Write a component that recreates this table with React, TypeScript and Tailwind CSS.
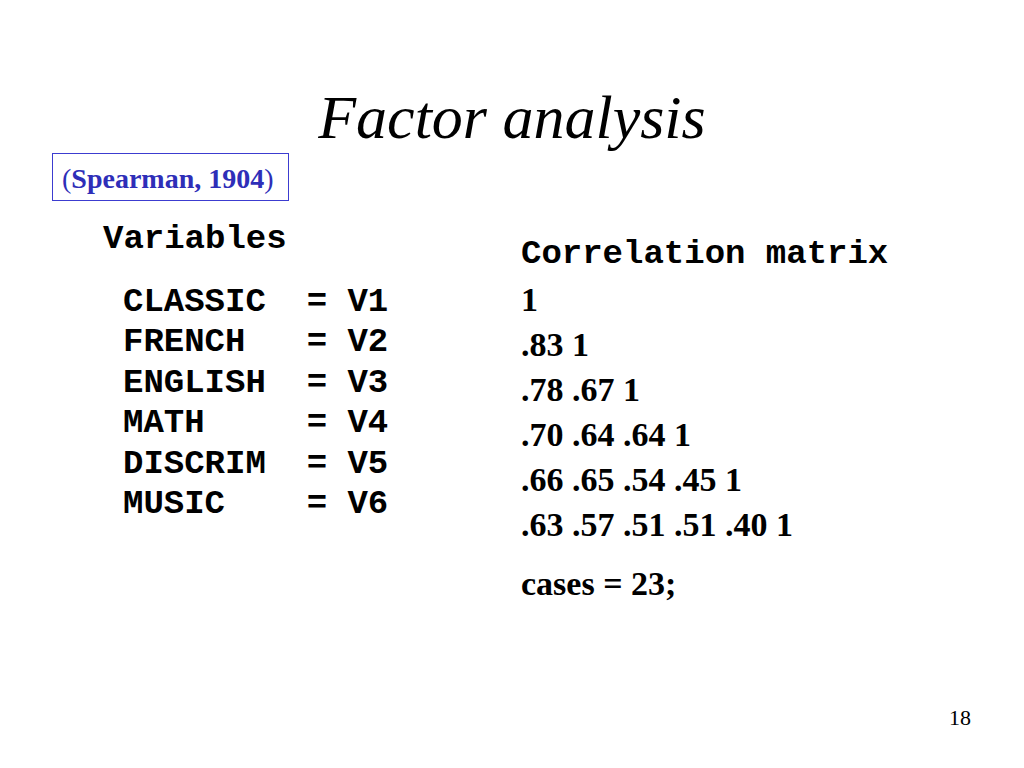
const variables = [
  "CLASSIC  = V1",
  "FRENCH   = V2",
  "ENGLISH  = V3",
  "MATH     = V4",
  "DISCRIM  = V5",
  "MUSIC    = V6",
];

const matrix = [
  "1",
  ".83 1",
  ".78 .67 1",
  ".70 .64 .64 1",
  ".66 .65 .54 .45 1",
  ".63 .57 .51 .51 .40 1",
];

const serif = "font-['Liberation_Serif','Times_New_Roman',serif]";
const mono = "font-['Liberation_Mono','Courier_New',monospace]";

export default function App() {
  return (
    <div className="w-[1024px] h-[768px] bg-white text-black flex flex-col">
      {/* Title */}
      <h1 className={`${serif} italic text-[62px] leading-none text-center mt-[86px]`}>
        Factor analysis
      </h1>

      {/* Citation box */}
      <div className="mt-[5px] ml-[52px]">
        <div
          className={`${serif} inline-block w-[237px] border border-[#3c3cd0] pl-[9px] pt-[11px] pb-[7px] text-[28px] leading-[28px] font-bold text-[#2e2eb8] whitespace-nowrap`}
        >
          <span className="font-normal">(</span>Spearman, 1904<span className="font-normal">)</span>
        </div>
      </div>

      {/* Two columns */}
      <div className="flex mt-[18px] ml-[103px]">
        <div className={`${mono} w-[418px] font-bold text-[34px] leading-[40.5px]`}>
          <div>Variables</div>
          <div className="mt-[22px] pl-[20px]">
            {variables.map((v) => (
              <div key={v} className="whitespace-pre">
                {v}
              </div>
            ))}
          </div>
        </div>

        <div className="mt-[15px]">
          <div className={`${mono} font-bold text-[34px] leading-[40.5px] whitespace-pre`}>
            Correlation matrix
          </div>
          <div className={`${serif} font-bold text-[34px] leading-[45px] mt-[2px]`}>
            {matrix.map((row) => (
              <div key={row}>{row}</div>
            ))}
            <div className="mt-[14px]">cases = 23;</div>
          </div>
        </div>
      </div>

      {/* Slide number */}
      <div className={`${serif} mt-auto pr-[53px] pb-[39px] text-right text-[22px] leading-none`}>
        18
      </div>
    </div>
  );
}
